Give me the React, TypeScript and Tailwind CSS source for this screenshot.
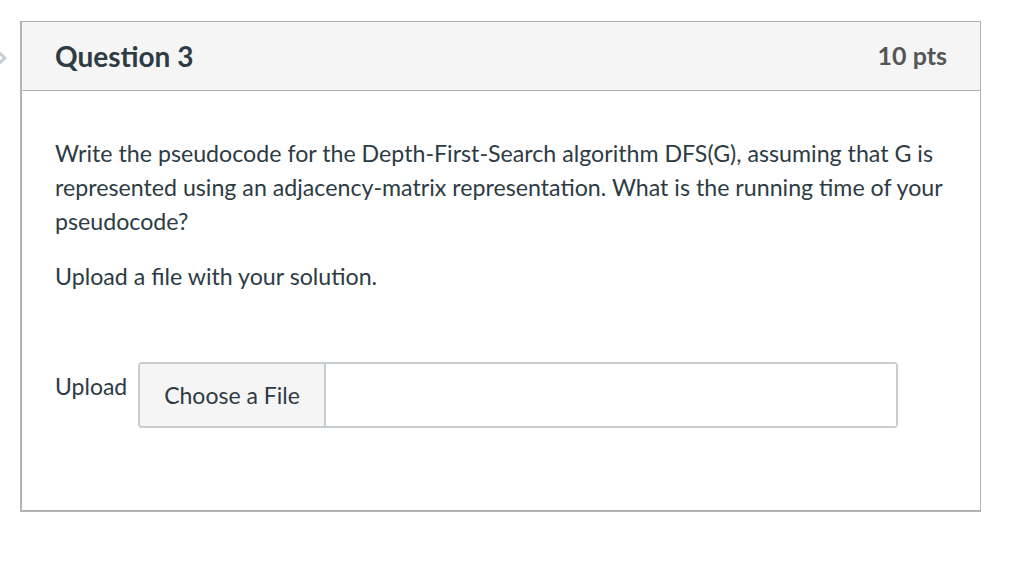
export default function App() {
  return (
    <div className="relative h-[561px] w-[1024px] bg-white font-['Lato','Noto_Sans',sans-serif] text-[#2d3b45]">
      {/* chevron sticking out on the left edge */}
      <svg
        className="absolute left-[-8px] top-[47px]"
        width="16"
        height="22"
        viewBox="0 0 16 22"
      >
        <path d="M3 2 L13 11 L3 20" fill="none" stroke="#c4ccd4" strokeWidth="3" strokeLinejoin="round" />
      </svg>

      <div className="pl-5 pt-[21px]">
        <div className="w-[961px] border border-[#b2b2b2] border-l-2 border-b-2">
          <div className="flex h-[69px] items-center justify-between border-b border-[#b2b2b2] bg-[#f5f5f5] pl-[33px] pr-[33px]">
            <h2 className="text-[28px] font-bold">Question 3</h2>
            <span className="text-[25px] font-bold text-[#555]">10 pts</span>
          </div>

          <div className="pl-[33px] pr-[28px] pt-[45px] pb-[82px]">
            <p className="text-[23.2px] leading-[34px]">
              Write the pseudocode for the Depth-First-Search algorithm DFS(G), assuming that G is
              represented using an adjacency-matrix representation. What is the running time of your
              pseudocode?
            </p>
            <p className="mt-[21px] text-[23.2px] leading-[34px]">Upload a file with your solution.</p>

            <div className="mt-[69px] flex items-start">
              <span className="w-[83px] pt-[9px] text-[23px] leading-[30px]">Upload</span>
              <div className="flex h-[66px] w-[760px] rounded-[4px] border-2 border-[#c7cdd1]">
                <button className="flex h-full w-[186px] items-center justify-center rounded-l-[3px] border-r-2 border-[#c7cdd1] bg-[#f5f5f5] text-[23px]">
                  Choose a File
                </button>
                <div className="flex-1 bg-white" />
              </div>
            </div>
          </div>
        </div>
      </div>
    </div>
  );
}
